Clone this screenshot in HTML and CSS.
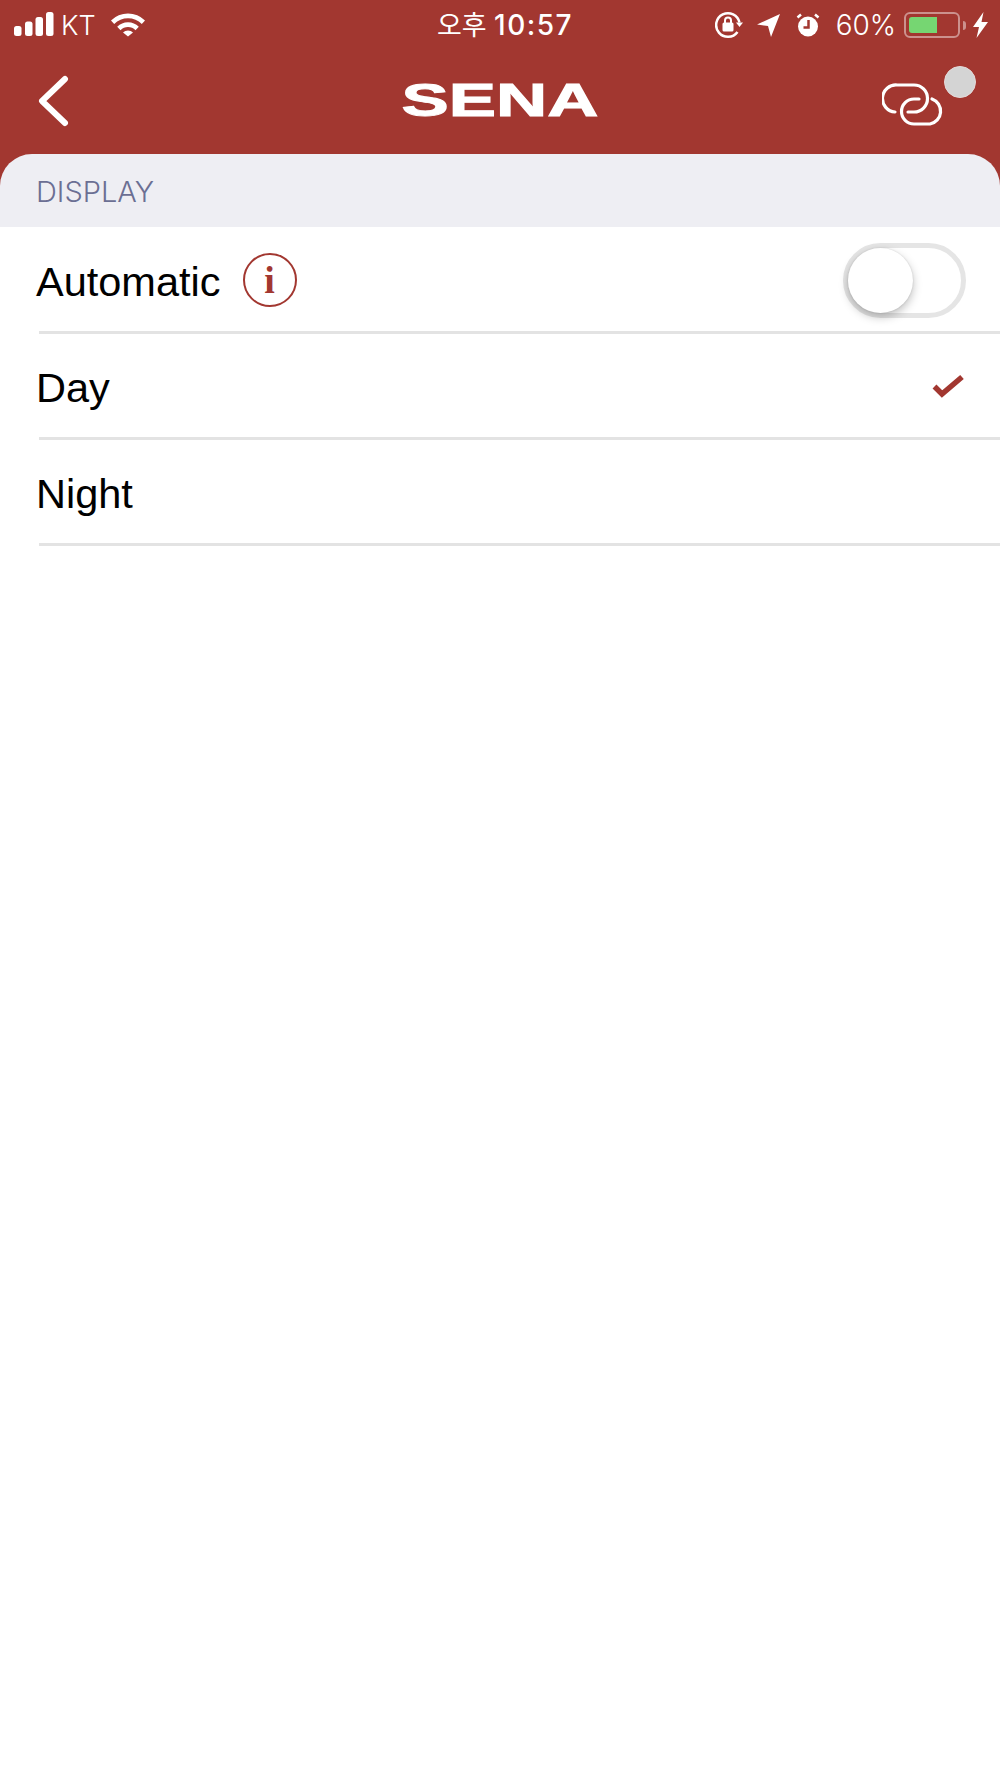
FILE: index.html
```html
<!DOCTYPE html>
<html lang="en">
<head>
    <meta charset="UTF-8">
    <meta name="viewport" content="width=device-width, initial-scale=1.0">
    <title>Display</title>
    <link rel="stylesheet" href="styles.css">
</head>
<body>
    <header class="header">
        <div class="status-bar">
            <div class="status-left">
                <svg class="signal" width="40" height="26" viewBox="0 0 40 26">
                    <rect x="0" y="14" width="7.5" height="10" rx="2.5"/>
                    <rect x="11" y="9.5" width="7.5" height="14.5" rx="2.5"/>
                    <rect x="21.5" y="5" width="7.5" height="19" rx="2.5"/>
                    <rect x="32" y="0" width="7.5" height="24" rx="2.5"/>
                </svg>
                <span class="carrier">KT</span>
                <svg class="wifi" width="36" height="26" viewBox="0 0 36 26">
                    <path d="M1 8.500a24 24 0 0 1 34 0l-3.200 3.400a19.500 19.500 0 0 0-27.600 0z"/>
                    <path d="M7.200 14.800a15.200 15.200 0 0 1 21.600 0l-3.300 3.400a10.500 10.500 0 0 0-15 0z"/>
                    <path d="M13 20.600a7 7 0 0 1 10 0L18 24.600z"/>
                </svg>
            </div>
            <div class="status-time"><span class="time-ko">오후</span> <span class="time-num">10:57</span></div>
            <div class="status-right">
                <svg class="lock" width="28" height="28" viewBox="0 0 28 28">
                    <path class="line" d="M24.500 11.500A11.800 11.800 0 1 0 22.500 21"/>
                    <path d="M21 11.500h7l-3.500 4.500z"/>
                    <rect x="7.500" y="11.500" width="11" height="9" rx="1.500"/>
                    <path class="line thin" d="M10 12V9.500a3 3 0 0 1 6 0V12"/>
                </svg>
                <svg class="arrow" width="23" height="23" viewBox="0 0 23 23">
                    <path d="M23 0 L14 23 L11 12 L0 10.500z"/>
                </svg>
                <svg class="alarm" width="24" height="24" viewBox="0 0 24 24">
                    <circle cx="12" cy="13.500" r="10"/>
                    <path class="line" d="M1.500 4.500 5 1.500M22.500 4.500 19 1.500"/>
                    <path class="hand" d="M12.500 7v7.500H7.500"/>
                </svg>
                <span class="percent">60%</span>
                <div class="battery">
                    <div class="battery-fill"></div>
                </div>
                <div class="battery-nub"></div>
                <svg class="bolt" width="15" height="26" viewBox="0 0 15 26">
                    <path d="M10.500 0 0 15h6L3.500 26 15 10H8.500z"/>
                </svg>
            </div>
        </div>
        <nav class="nav">
            <svg class="back" width="32" height="52" viewBox="0 0 32 52">
                <path d="M28 4 5 26l23 22"/>
            </svg>
            <div class="logo"><span class="logo-text">SENA</span></div>
            <div class="link-wrap">
                <svg class="link" width="64" height="46" viewBox="0 0 64 46">
                    <path d="M13 31A13.500 13.500 0 0 1 15 4H32A13.500 13.500 0 0 1 32 31H26"/>
                    <path d="M50 18A13 13 0 0 1 48 43H32A12.500 12.500 0 0 1 32 18H37"/>
                </svg>
                <span class="status-dot"></span>
            </div>
        </nav>
    </header>

    <main class="content">
        <div class="section-title">DISPLAY</div>
        <div class="list">
            <div class="row">
                <div class="row-label">
                    <span class="row-text">Automatic</span>
                    <span class="info">i</span>
                </div>
                <div class="toggle">
                    <div class="toggle-thumb"></div>
                </div>
            </div>
            <div class="separator"></div>
            <div class="row">
                <span class="row-text">Day</span>
                <svg class="check" width="32" height="24" viewBox="0 0 32 24">
                    <path d="M2.500 12.500 10 20 30 3"/>
                </svg>
            </div>
            <div class="separator"></div>
            <div class="row">
                <span class="row-text">Night</span>
            </div>
            <div class="separator"></div>
        </div>
    </main>
</body>
</html>
```

FILE: styles.css
```css
/* === PAGE === */
body {
    margin: 0;
    width: 1000px;
    height: 1778px;
    background-color: white;
    font-family: "Liberation Sans", Arial, sans-serif;
    overflow: hidden;
}

/* === HEADER === */
.header {
    height: 154px;
    background-color: #a23730;
    color: white;
}

.status-bar {
    height: 50px;
    display: grid;
    grid-template-columns: 1fr auto 1fr;
    align-items: center;
    font-family: Inter, "Noto Sans CJK KR", sans-serif;
    font-size: 27px;
}

.status-bar svg {
    fill: white;
    display: block;
}

.status-left {
    display: flex;
    align-items: center;
    padding-left: 14px;
}

.carrier {
    margin-left: 7px;
    font-weight: 300;
}

.wifi {
    margin-left: 14px;
}

.status-time {
    margin: 0 0 3px 10px;
    font-weight: 500;
    font-size: 28px;
}

.time-ko {
    font-family: "Noto Sans CJK KR", sans-serif;
    font-size: 27px;
    font-weight: 400;
}

.time-num {
    letter-spacing: 1.5px;
}

.status-right {
    display: flex;
    align-items: center;
    justify-content: flex-end;
    padding-right: 12px;
}

.status-bar .line {
    fill: none;
    stroke: white;
    stroke-width: 2.5;
}

.status-bar .thin {
    stroke-width: 2;
}

.status-bar .hand {
    fill: none;
    stroke: #a23730;
    stroke-width: 2.5;
}

.arrow {
    margin-left: 14px;
}

.alarm {
    margin-left: 16px;
}

.percent {
    margin-left: 16px;
    font-weight: 300;
    font-size: 28px;
}

.battery {
    margin-left: 8px;
    width: 56px;
    height: 26px;
    box-sizing: border-box;
    border: 2px solid rgba(255, 255, 255, 0.45);
    border-radius: 6px;
    padding: 3px;
}

.battery-fill {
    width: 28px;
    height: 100%;
    background-color: #76d672;
    border-radius: 3px 0 0 3px;
}

.battery-nub {
    width: 3px;
    height: 9px;
    margin-left: 3px;
    background-color: rgba(255, 255, 255, 0.45);
    border-radius: 0 3px 3px 0;
}

.bolt {
    margin-left: 7px;
}

/* === NAV === */
.nav {
    height: 104px;
    display: grid;
    grid-template-columns: 1fr auto 1fr;
    align-items: start;
}

.back {
    fill: none;
    stroke: white;
    stroke-width: 6;
    stroke-linecap: round;
    stroke-linejoin: round;
    margin: 25px 0 0 37px;
}

.logo {
    width: 196px;
    margin-top: 25px;
    height: 50px;
    display: flex;
    justify-content: center;
    align-items: center;
}

.logo-text {
    font-size: 46px;
    line-height: 50px;
    font-weight: bold;
    -webkit-text-stroke: 1px white;
    transform: scaleX(1.54);
}

.link-wrap {
    position: relative;
    justify-self: end;
    margin: 31px 54px 0 0;
}

.link {
    display: block;
    fill: none;
    stroke: white;
    stroke-width: 3.2;
    stroke-linecap: round;
}

.status-dot {
    position: absolute;
    top: -15px;
    right: -30px;
    width: 32px;
    height: 32px;
    box-sizing: border-box;
    border-radius: 50%;
    background-color: #d4d4d4;
    border: 1px solid #e4dada;
}

/* === CONTENT === */
.content {
    background: linear-gradient(#a23730 40px, white 40px);
}

.section-title {
    height: 73px;
    box-sizing: border-box;
    padding: 21px 0 0 36px;
    background-color: #eeeef3;
    border-radius: 32px 32px 0 0;
    color: #6b6f93;
    font-family: Inter, "Liberation Sans", sans-serif;
    font-size: 29px;
    font-weight: 300;
    line-height: 34px;
}

.list {
    padding-top: 1px;
    background-color: white;
}

.row {
    height: 103px;
    display: flex;
    align-items: center;
    justify-content: space-between;
    padding: 0 34px 0 36px;
    color: black;
    font-size: 41.5px;
}

.row-text {
    padding-top: 4px;
}

.row-label {
    display: flex;
    align-items: center;
}

.separator {
    height: 3px;
    margin-left: 39px;
    background-color: #e3e3e3;
}

.info {
    width: 54px;
    height: 54px;
    margin-left: 22px;
    box-sizing: border-box;
    border: 2px solid #a23730;
    border-radius: 50%;
    color: #a23730;
    font-family: "Liberation Serif", serif;
    font-size: 38px;
    font-weight: bold;
    line-height: 50px;
    text-align: center;
}

.toggle {
    width: 123px;
    height: 75px;
    box-sizing: border-box;
    border: 5px solid #e5e5e5;
    border-radius: 38px;
    margin: 2px 0 0 0;
}

.toggle-thumb {
    width: 65px;
    height: 65px;
    border-radius: 50%;
    background-color: white;
    box-shadow: 0 4px 10px rgba(0, 0, 0, 0.25), 0 0 2px rgba(0, 0, 0, 0.15);
}

.check {
    fill: none;
    stroke: #a23730;
    stroke-width: 5.5;
    margin-right: 2px;
}
```
